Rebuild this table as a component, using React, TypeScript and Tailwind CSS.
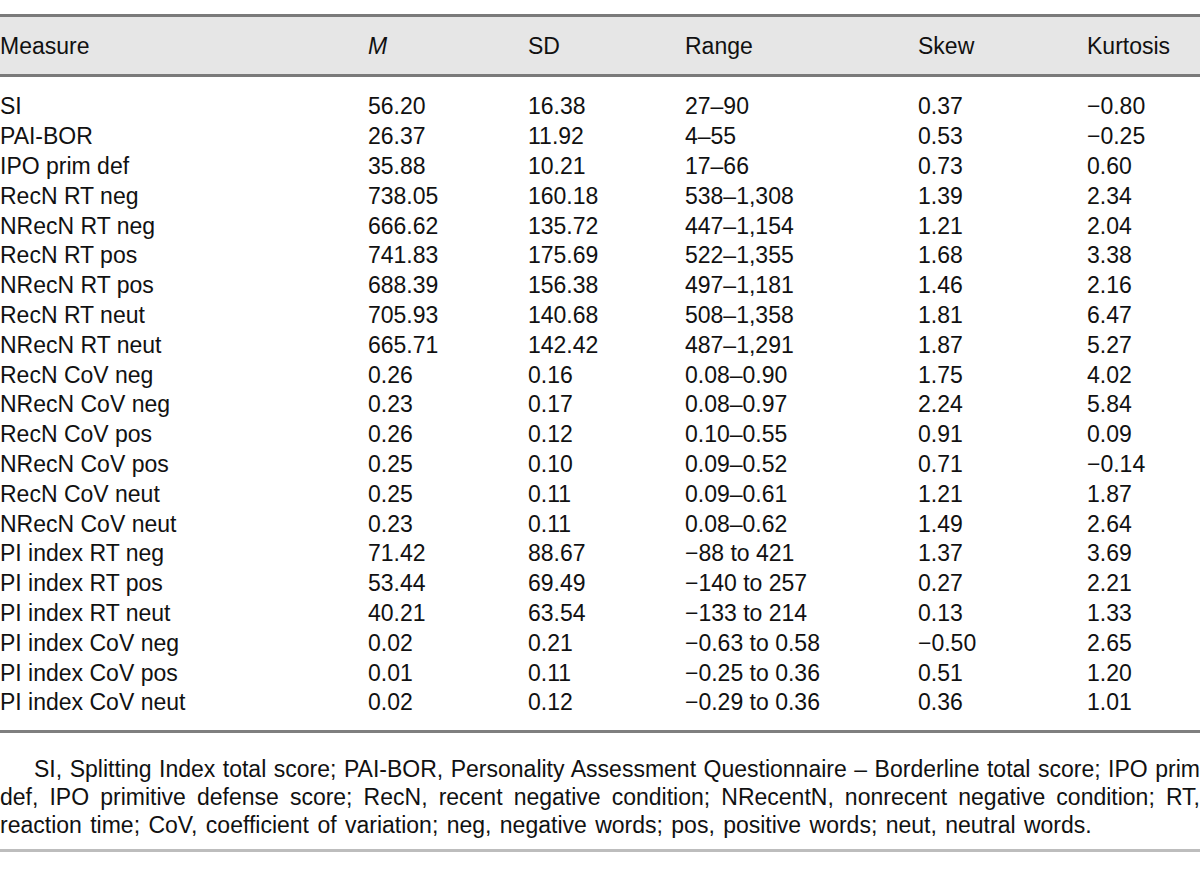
const rows = [
  ["SI", "56.20", "16.38", "27–90", "0.37", "−0.80"],
  ["PAI-BOR", "26.37", "11.92", "4–55", "0.53", "−0.25"],
  ["IPO prim def", "35.88", "10.21", "17–66", "0.73", "0.60"],
  ["RecN RT neg", "738.05", "160.18", "538–1,308", "1.39", "2.34"],
  ["NRecN RT neg", "666.62", "135.72", "447–1,154", "1.21", "2.04"],
  ["RecN RT pos", "741.83", "175.69", "522–1,355", "1.68", "3.38"],
  ["NRecN RT pos", "688.39", "156.38", "497–1,181", "1.46", "2.16"],
  ["RecN RT neut", "705.93", "140.68", "508–1,358", "1.81", "6.47"],
  ["NRecN RT neut", "665.71", "142.42", "487–1,291", "1.87", "5.27"],
  ["RecN CoV neg", "0.26", "0.16", "0.08–0.90", "1.75", "4.02"],
  ["NRecN CoV neg", "0.23", "0.17", "0.08–0.97", "2.24", "5.84"],
  ["RecN CoV pos", "0.26", "0.12", "0.10–0.55", "0.91", "0.09"],
  ["NRecN CoV pos", "0.25", "0.10", "0.09–0.52", "0.71", "−0.14"],
  ["RecN CoV neut", "0.25", "0.11", "0.09–0.61", "1.21", "1.87"],
  ["NRecN CoV neut", "0.23", "0.11", "0.08–0.62", "1.49", "2.64"],
  ["PI index RT neg", "71.42", "88.67", "−88 to 421", "1.37", "3.69"],
  ["PI index RT pos", "53.44", "69.49", "−140 to 257", "0.27", "2.21"],
  ["PI index RT neut", "40.21", "63.54", "−133 to 214", "0.13", "1.33"],
  ["PI index CoV neg", "0.02", "0.21", "−0.63 to 0.58", "−0.50", "2.65"],
  ["PI index CoV pos", "0.01", "0.11", "−0.25 to 0.36", "0.51", "1.20"],
  ["PI index CoV neut", "0.02", "0.12", "−0.29 to 0.36", "0.36", "1.01"],
]

const cols = "grid grid-cols-[368px_160px_157px_233px_169px_1fr]"

export default function App() {
  return (
    <div className="w-[1200px] h-[877px] bg-white overflow-hidden pt-[14px] text-[23px] text-[#111] font-['Liberation_Sans',Arial,sans-serif]">
      {/* header */}
      <div className={`${cols} h-[63px] pt-[2px] items-center bg-[#e6e6e6] border-t-[3px] border-b-[3px] border-[#7a7a7a]`}>
        <div>Measure</div>
        <div className="italic">M</div>
        <div>SD</div>
        <div>Range</div>
        <div>Skew</div>
        <div>Kurtosis</div>
      </div>

      {/* body */}
      <div className="pt-[15px] pb-[12px] border-b-[3px] border-[#7f7f7f]">
        {rows.map((r) => (
          <div key={r[0]} className={`${cols} h-[29.8px] items-center leading-none`}>
            {r.map((c, i) => (
              <div key={i} className="whitespace-nowrap">
                {c}
              </div>
            ))}
          </div>
        ))}
      </div>

      {/* footnote */}
      <div className="pt-[22px] pb-[10px] border-b-[3px] border-[#bdbdbd] leading-[28px]">
        <div className="pl-[34px] text-justify [text-align-last:justify] whitespace-nowrap overflow-hidden">
          SI, Splitting Index total score; PAI-BOR, Personality Assessment Questionnaire – Borderline total score; IPO prim
        </div>
        <div className="text-justify [text-align-last:justify]">
          def, IPO primitive defense score; RecN, recent negative condition; NRecentN, nonrecent negative condition; RT,
        </div>
        <div className="[word-spacing:2px]">
          reaction time; CoV, coefficient of variation; neg, negative words; pos, positive words; neut, neutral words.
        </div>
      </div>
    </div>
  )
}
